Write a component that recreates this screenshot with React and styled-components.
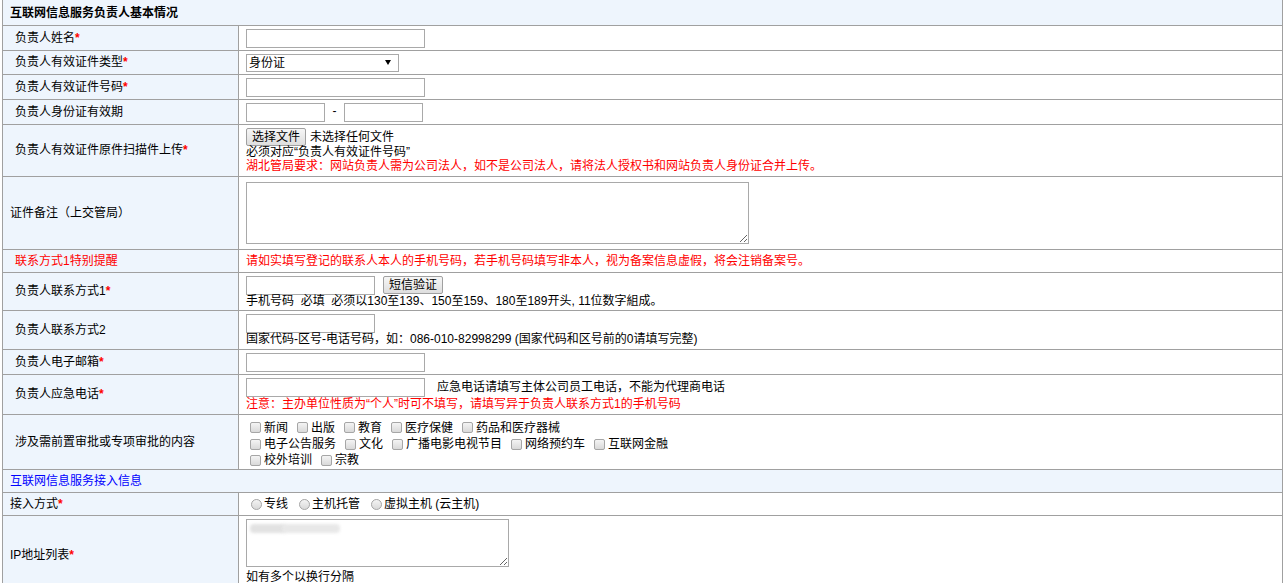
import React from "react";
import styled, { createGlobalStyle } from "styled-components";

const GlobalStyle = createGlobalStyle`
  body {
    margin: 0;
    background: #fff;
    font-family: "Liberation Sans", "Noto Sans CJK SC", sans-serif;
    font-size: 12px;
    color: #000;
  }
`;

const Page = styled.div`
  padding-left: 2px;
  margin-top: -1px;
`;

const Table = styled.table`
  width: 1281px;
  border-collapse: collapse;
  table-layout: fixed;
  td {
    box-sizing: border-box;
    border: 1px solid #a0a0a0;
  }
`;

const LabelCol = styled.col`
  width: 236px;
`;

const HeadCell = styled.td`
  background: #eef5fd;
  height: ${(p) => p.$h}px;
  padding: ${(p) => (p.$blue ? "0" : "1px")} 0 0 7px;
  font-weight: ${(p) => (p.$blue ? "normal" : "bold")};
  color: ${(p) => (p.$blue ? "#0000ff" : "#000")};
  line-height: 15px;
`;

const LabelCell = styled.td`
  background: #eef5fd;
  height: ${(p) => p.$h}px;
  padding: 0 0 0 ${(p) => (p.$indent ? 12 : 7)}px;
  color: ${(p) => (p.$red ? "#ff0000" : "#000")};
  line-height: 15px;
  vertical-align: middle;
`;

const FieldCell = styled.td`
  background: #fff;
  padding: ${(p) => p.$pad || "0 0 0 7px"};
  line-height: 15px;
  vertical-align: ${(p) => p.$valign || "middle"};
  color: ${(p) => (p.$red ? "#ff0000" : "#000")};
`;

const Star = styled.span`
  color: #ff0000;
  font-weight: bold;
`;

const TextInput = styled.input`
  box-sizing: border-box;
  width: ${(p) => p.$w}px;
  height: ${(p) => p.$h || 19}px;
  margin: 0;
  padding: 1px 2px;
  border: 1px solid #a9a9a9;
  font: inherit;
  vertical-align: middle;
`;

const SelectWrap = styled.span`
  position: relative;
  display: inline-block;
  vertical-align: middle;
`;

const Select = styled.select`
  appearance: none;
  box-sizing: border-box;
  width: 153px;
  height: 18px;
  margin: 0;
  padding: 0 2px;
  border: 1px solid #a9a9a9;
  border-radius: 0;
  background: #fff;
  font: inherit;
  line-height: 16px;
`;

const SelectArrow = styled.span`
  position: absolute;
  right: 8px;
  top: 6px;
  width: 0;
  height: 0;
  border-left: 3px solid transparent;
  border-right: 3px solid transparent;
  border-top: 5px solid #000;
  pointer-events: none;
`;

const Dash = styled.span`
  display: inline-block;
  margin: 0 6px 0 6px;
  width: 7px;
  text-align: center;
`;

const Button = styled.button`
  box-sizing: border-box;
  height: 18px;
  margin: 0;
  padding: 0 5px;
  border: 1px solid #a0a0a0;
  border-radius: 2px;
  background: linear-gradient(#f6f6f6, #dedede);
  font: inherit;
  font-size: 12px;
  line-height: 16px;
  color: #000;
  vertical-align: middle;
`;

const Line = styled.div`
  height: ${(p) => p.$lh || 14}px;
  line-height: ${(p) => p.$lh || 14}px;
  color: ${(p) => (p.$red ? "#ff0000" : "#000")};
  white-space: nowrap;
`;

const TopLine = styled.div`
  display: flex;
  align-items: flex-start;
  gap: ${(p) => p.$gap || 0}px;
  height: ${(p) => p.$h || 18}px;
  line-height: 18px;
`;

const TextArea = styled.textarea`
  box-sizing: border-box;
  display: block;
  width: ${(p) => p.$w}px;
  height: ${(p) => p.$h}px;
  margin: 0;
  border: 1px solid #a9a9a9;
  font: inherit;
`;

const AreaWrap = styled.div`
  position: relative;
  width: ${(p) => p.$w}px;
`;

const Blur = styled.span`
  position: absolute;
  top: 5px;
  left: ${(p) => p.$l}px;
  width: ${(p) => p.$w}px;
  height: 9px;
  border-radius: 4px;
  background: ${(p) => p.$c};
  filter: blur(1.5px);
`;

const CheckList = styled.div`
  padding: 4px 0 0 11px;
`;

const CheckRow = styled.div`
  display: flex;
  align-items: center;
  height: ${(p) => p.$h}px;
`;

const Option = styled.label`
  display: inline-flex;
  align-items: center;
  margin-right: ${(p) => p.$mr}px;
  white-space: nowrap;
  line-height: 16px;
`;

const Box = styled.span`
  box-sizing: border-box;
  flex: none;
  display: inline-block;
  width: 11px;
  height: 11px;
  margin-right: ${(p) => (p.$round ? 2 : 3)}px;
  border: 1px solid #a6a6a6;
  border-radius: ${(p) => (p.$round ? "50%" : "2px")};
  background: linear-gradient(#f4f4f4, #d9d9d9);
`;

const RadioRow = styled.div`
  display: flex;
  align-items: center;
  padding-left: 12px;
`;

const checks = [
  { h: 17, items: ["新闻", "出版", "教育", "医疗保健", "药品和医疗器械"] },
  { h: 16, items: ["电子公告服务", "文化", "广播电影电视节目", "网络预约车", "互联网金融"] },
  { h: 16, items: ["校外培训", "宗教"] },
];

const radios = ["专线", "主机托管", "虚拟主机 (云主机)"];

export default function App() {
  return (
    <Page>
      <GlobalStyle />
      <Table>
        <colgroup>
          <LabelCol />
          <col />
        </colgroup>
        <tbody>
          <tr>
            <HeadCell colSpan={2} $h={26}>
              互联网信息服务负责人基本情况
            </HeadCell>
          </tr>
          <tr>
            <LabelCell $h={25} $indent>
              负责人姓名<Star>*</Star>
            </LabelCell>
            <FieldCell>
              <TextInput $w={179} />
            </FieldCell>
          </tr>
          <tr>
            <LabelCell $h={24} $indent>
              负责人有效证件类型<Star>*</Star>
            </LabelCell>
            <FieldCell>
              <SelectWrap>
                <Select defaultValue="id">
                  <option value="id">身份证</option>
                  <option value="pp">护照</option>
                </Select>
                <SelectArrow />
              </SelectWrap>
            </FieldCell>
          </tr>
          <tr>
            <LabelCell $h={25} $indent>
              负责人有效证件号码<Star>*</Star>
            </LabelCell>
            <FieldCell>
              <TextInput $w={179} />
            </FieldCell>
          </tr>
          <tr>
            <LabelCell $h={25} $indent>
              负责人身份证有效期
            </LabelCell>
            <FieldCell>
              <TextInput $w={79} />
              <Dash>-</Dash>
              <TextInput $w={79} />
            </FieldCell>
          </tr>
          <tr>
            <LabelCell $h={52} $indent>
              负责人有效证件原件扫描件上传<Star>*</Star>
            </LabelCell>
            <FieldCell $pad="3px 0 0 7px" $valign="top">
              <TopLine $gap={4} $h={17}>
                <Button>选择文件</Button>
                <span>未选择任何文件</span>
              </TopLine>
              <Line>必须对应“负责人有效证件号码”</Line>
              <Line $red>
                湖北管局要求：网站负责人需为公司法人，如不是公司法人，请将法人授权书和网站负责人身份证合并上传。
              </Line>
            </FieldCell>
          </tr>
          <tr>
            <LabelCell $h={73}>证件备注（上交管局）</LabelCell>
            <FieldCell>
              <TextArea $w={503} $h={62} />
            </FieldCell>
          </tr>
          <tr>
            <LabelCell $h={23} $indent $red>
              联系方式1特别提醒
            </LabelCell>
            <FieldCell $red>
              请如实填写登记的联系人本人的手机号码，若手机号码填写非本人，视为备案信息虚假，将会注销备案号。
            </FieldCell>
          </tr>
          <tr>
            <LabelCell $h={38} $indent>
              负责人联系方式1<Star>*</Star>
            </LabelCell>
            <FieldCell $pad="3px 0 0 7px" $valign="top">
              <TopLine $gap={8}>
                <TextInput $w={129} />
                <Button>短信验证</Button>
              </TopLine>
              <Line>
                手机号码&nbsp; 必填&nbsp; 必须以130至139、150至159、180至189开头, 11位数字組成。
              </Line>
            </FieldCell>
          </tr>
          <tr>
            <LabelCell $h={39} $indent>
              负责人联系方式2
            </LabelCell>
            <FieldCell $pad="3px 0 0 7px" $valign="top">
              <TopLine>
                <TextInput $w={129} />
              </TopLine>
              <Line>
                国家代码-区号-电话号码，如：086-010-82998299 (国家代码和区号前的0请填写完整)
              </Line>
            </FieldCell>
          </tr>
          <tr>
            <LabelCell $h={25} $indent>
              负责人电子邮箱<Star>*</Star>
            </LabelCell>
            <FieldCell>
              <TextInput $w={179} />
            </FieldCell>
          </tr>
          <tr>
            <LabelCell $h={40} $indent>
              负责人应急电话<Star>*</Star>
            </LabelCell>
            <FieldCell $pad="3px 0 0 7px" $valign="top">
              <TopLine $gap={12} $h={19}>
                <TextInput $w={179} />
                <span>应急电话请填写主体公司员工电话，不能为代理商电话</span>
              </TopLine>
              <Line $red>
                注意：主办单位性质为“个人”时可不填写，请填写异于负责人联系方式1的手机号码
              </Line>
            </FieldCell>
          </tr>
          <tr>
            <LabelCell $h={55} $indent>
              涉及需前置审批或专项审批的内容
            </LabelCell>
            <FieldCell $pad="0" $valign="top">
              <CheckList>
                {checks.map((row, i) => (
                  <CheckRow key={i} $h={row.h}>
                    {row.items.map((name) => (
                      <Option key={name} $mr={9}>
                        <Box />
                        {name}
                      </Option>
                    ))}
                  </CheckRow>
                ))}
              </CheckList>
            </FieldCell>
          </tr>
          <tr>
            <HeadCell colSpan={2} $h={23} $blue>
              互联网信息服务接入信息
            </HeadCell>
          </tr>
          <tr>
            <LabelCell $h={23}>
              接入方式<Star>*</Star>
            </LabelCell>
            <FieldCell $pad="0">
              <RadioRow>
                {radios.map((name) => (
                  <Option key={name} $mr={11}>
                    <Box $round />
                    {name}
                  </Option>
                ))}
              </RadioRow>
            </FieldCell>
          </tr>
          <tr>
            <LabelCell $h={80}>
              IP地址列表<Star>*</Star>
            </LabelCell>
            <FieldCell $pad="3px 0 4px 7px" $valign="top">
              <AreaWrap $w={263}>
                <TextArea $w={263} $h={48} />
                <Blur $l={4} $w={36} $c="#e2e2e2" />
                <Blur $l={36} $w={58} $c="#e8e8e8" />
              </AreaWrap>
              <Line $lh={20}>如有多个以换行分隔</Line>
            </FieldCell>
          </tr>
        </tbody>
      </Table>
    </Page>
  );
}
